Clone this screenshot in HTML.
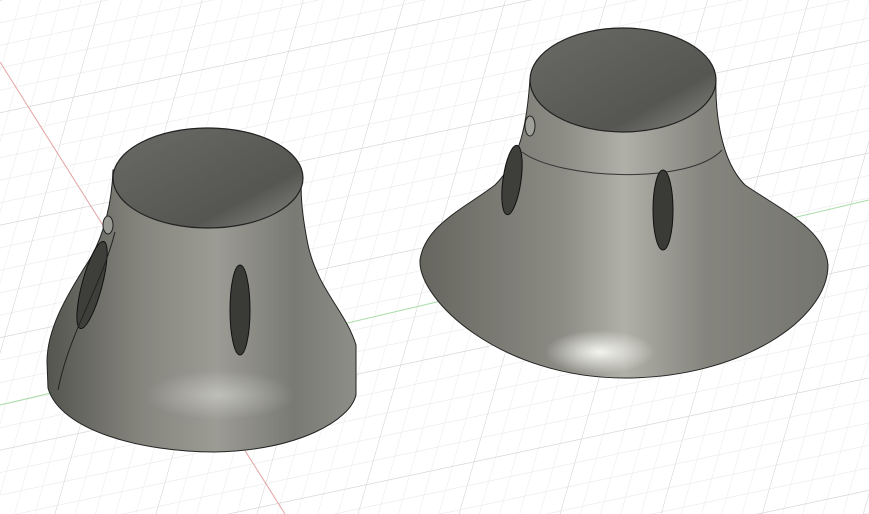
<!DOCTYPE html>
<html><head><style>html,body{margin:0;padding:0;background:#fff;}svg{display:block}</style></head>
<body>
<svg width="869" height="514" viewBox="0 0 869 514" xmlns="http://www.w3.org/2000/svg">
<defs>
<pattern id="g" width="22" height="22" patternUnits="userSpaceOnUse" patternTransform="rotate(-12) skewX(-28)">
<path d="M0 0H22M0 0V22" stroke="#e6e6e6" stroke-width="1" fill="none"/>
</pattern>
<pattern id="G" width="110" height="110" patternUnits="userSpaceOnUse" patternTransform="rotate(-12) skewX(-28)">
<path d="M0 0H110M0 0V110" stroke="#d2d2d2" stroke-width="1" fill="none"/>
</pattern>
<linearGradient id="lb" x1="0" x2="1" y1="0" y2="0">
<stop offset="0" stop-color="#55554f"/><stop offset="0.3" stop-color="#85857e"/><stop offset="0.55" stop-color="#9c9c95"/><stop offset="0.8" stop-color="#7a7a74"/><stop offset="1" stop-color="#8e8e88"/>
</linearGradient>
<linearGradient id="rb" x1="0" x2="1" y1="0" y2="0">
<stop offset="0" stop-color="#66665f"/><stop offset="0.35" stop-color="#8c8c85"/><stop offset="0.5" stop-color="#b0b0a8"/><stop offset="0.7" stop-color="#85857e"/><stop offset="1" stop-color="#75756f"/>
</linearGradient>
<linearGradient id="inn" x1="0" x2="1" y1="0" y2="1">
<stop offset="0" stop-color="#6a6a66"/><stop offset="0.7" stop-color="#555552"/><stop offset="1" stop-color="#8a8a85"/>
</linearGradient>
<radialGradient id="hl" cx="0.5" cy="0.5" r="0.5"><stop offset="0" stop-color="#f4f4ef"/><stop offset="1" stop-color="#f4f4ef" stop-opacity="0"/></radialGradient>
</defs>
<rect width="869" height="514" fill="#fff"/>
<rect width="869" height="514" fill="url(#g)"/>
<rect width="869" height="514" fill="url(#G)"/>
<path d="M0 62 L285 514" stroke="#e3a3a3" stroke-width="1"/>
<path d="M0 405 L869 200" stroke="#a8dca8" stroke-width="1"/>

<!-- left bell -->
<path d="M113 170 C112 200 105 235 88 262 C65 298 47 330 47 362 L48 388 C60 430 140 452 215 452 C300 450 350 420 356 395 L356 345 C345 310 318 290 308 245 C302 215 300 190 302 175 Z" fill="url(#lb)" stroke="#222" stroke-width="1"/>
<ellipse cx="220" cy="395" rx="75" ry="25" fill="url(#hl)" opacity="0.4"/>
<ellipse cx="208" cy="178" rx="95" ry="50" fill="url(#inn)" stroke="#222" stroke-width="1.2"/>
<ellipse cx="240" cy="310" rx="10" ry="45" fill="#3a3a37" stroke="#111"/>
<ellipse cx="92" cy="285" rx="10" ry="45" transform="rotate(15 92 285)" fill="#3e3e3b" stroke="#111"/>
<ellipse cx="108" cy="225" rx="5" ry="9" fill="#9a9a94" stroke="#222"/>
<path d="M115 232 C100 290 70 330 58 390" fill="none" stroke="#222" stroke-width="1"/>

<!-- right bell -->
<path d="M530 78 C527 125 520 160 495 185 C465 208 425 225 420 260 C418 300 500 378 625 378 C740 378 828 320 828 265 C825 230 785 212 745 185 C720 160 715 110 716 78 Z" fill="url(#rb)" stroke="#222" stroke-width="1"/>
<ellipse cx="600" cy="352" rx="55" ry="22" fill="url(#hl)"/>
<path d="M522 152 C560 180 690 185 722 150" fill="none" stroke="#333" stroke-width="1"/>
<ellipse cx="623" cy="80" rx="93" ry="52" fill="url(#inn)" stroke="#222" stroke-width="1.2"/>
<ellipse cx="663" cy="210" rx="10" ry="40" fill="#3a3a37" stroke="#111"/>
<ellipse cx="512" cy="180" rx="9" ry="35" transform="rotate(8 512 180)" fill="#3e3e3b" stroke="#111"/>
<ellipse cx="530" cy="126" rx="5" ry="10" fill="#a0a09a" stroke="#222"/>
</svg>
</body></html>
